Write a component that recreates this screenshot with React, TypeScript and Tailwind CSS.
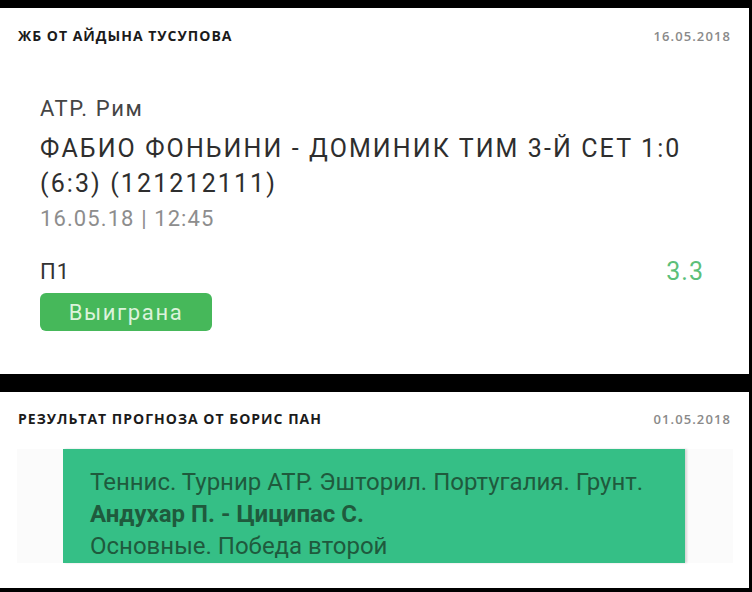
import React from "react";

const headFont = { fontFamily: '"Open Sans", "Liberation Sans", sans-serif' };

const CardHeader = ({ title, date }: { title: string; date: string }) => (
  <div className="flex items-center justify-between pl-[18px] pr-[18px]">
    <span className="text-[14px] font-bold uppercase leading-4 tracking-[1px] text-[#1b1b1b]">
      {title}
    </span>
    <span className="text-[13px] font-semibold leading-4 tracking-[1.1px] text-[#8a8a8a]">
      {date}
    </span>
  </div>
);

export default function App() {
  return (
    <div
      className="flex h-[592px] w-[752px] flex-col gap-[18px] overflow-hidden bg-black pt-2"
      style={headFont}
    >
      {/* first post */}
      <div className="h-[366px] w-[749px] shrink-0 bg-white pt-5">
        <CardHeader title="ЖБ от Айдына Тусупова" date="16.05.2018" />
        <div className="mt-[51px] mr-[13px] ml-6 pr-4 pl-4 font-['Roboto',sans-serif]">
          <div className="text-[22px] leading-7 tracking-[1.6px] text-[#454545]">ATP. Рим</div>
          <div className="mt-2 text-[25px] leading-[35px] tracking-[2.1px] text-[#2e2e2e]">
            ФАБИО ФОНЬИНИ - ДОМИНИК ТИМ 3-Й СЕТ 1:0 (6:3) (121212111)
          </div>
          <div className="mt-1 text-[22px] leading-7 tracking-[1.1px] text-[#8d8d8d]">
            16.05.18 | 12:45
          </div>
          <div className="mt-[25px] mr-4 flex items-center justify-between">
            <span className="text-[22px] leading-7 tracking-[1px] text-[#333]">П1</span>
            <span className="text-[25px] leading-7 tracking-[1px] text-[#5cbf79]">3.3</span>
          </div>
          <div className="mt-[7px] flex h-[38px] w-[172px] items-center justify-center rounded-md bg-[#46b85a] text-[22px] tracking-[1.6px] text-[#dcf3dc]">
            Выиграна
          </div>
        </div>
      </div>

      {/* second post */}
      <div className="h-[196px] w-[749px] shrink-0 bg-white pt-[19px]">
        <CardHeader title="Результат прогноза от Борис Пан" date="01.05.2018" />
        <div className="mt-[22px] ml-[17px] w-[716px] bg-[#fbfbfb] pl-[46px]">
          <div className="h-[114px] w-[622px] bg-[#35bf86] pt-[17px] pl-[27px] font-['Roboto',sans-serif] text-[24px] leading-8 text-[#1f5a3d] shadow-[2px_0_2px_rgba(0,0,0,0.15)]">
            <div>Теннис. Турнир ATP. Эшторил. Португалия. Грунт.</div>
            <div className="font-bold">Андухар П. - Циципас С.</div>
            <div>Основные. Победа второй</div>
          </div>
        </div>
      </div>
    </div>
  );
}
